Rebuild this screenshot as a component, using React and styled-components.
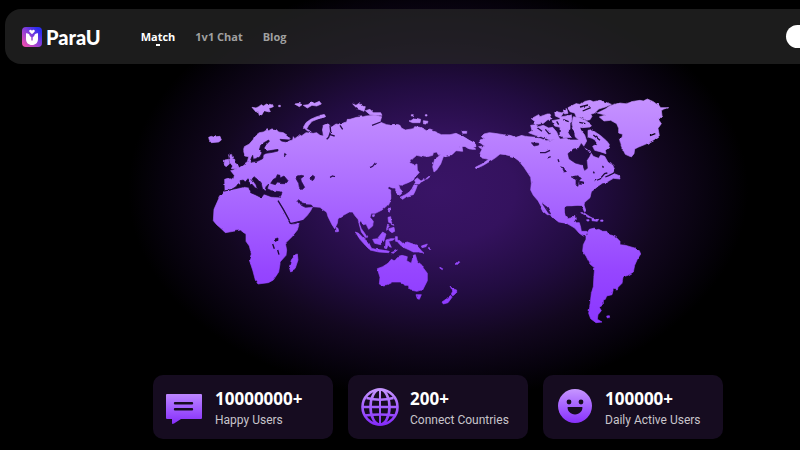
import React from 'react'
import styled, { createGlobalStyle } from 'styled-components'

const GlobalStyle = createGlobalStyle`
  body {
    margin: 0;
    background: #000;
    overflow: hidden;
    font-family: 'Open Sans', 'Noto Sans', sans-serif;
  }
`

const Page = styled.div`
  box-sizing: border-box;
  min-width: 876px;
  min-height: 100vh;
  padding: 9px 5px;
  background: radial-gradient(
    ellipse 310px 210px at 50% 190px,
    #391466 0%,
    #34125e 25%,
    #220c41 50%,
    #12071f 72%,
    #06020c 90%,
    #000 100%
  );
`

const Header = styled.header`
  box-sizing: border-box;
  display: flex;
  align-items: center;
  height: 55px;
  padding: 0 17px;
  border-radius: 16px;
  background: rgba(38, 38, 38, 0.74);
`

const Brand = styled.a`
  display: flex;
  align-items: center;
  gap: 4px;
  color: #fff;
  text-decoration: none;
`

const BrandName = styled.span`
  font-family: Lato, sans-serif;
  font-size: 20px;
  line-height: 20px;
  font-weight: 900;
`

const Nav = styled.nav`
  display: flex;
  gap: 20px;
  margin-left: 40px;
`

const NavLink = styled.a`
  position: relative;
  color: ${props => (props.$active ? '#fff' : '#a0a0a0')};
  font-size: 11px;
  line-height: 16px;
  font-weight: 700;
  text-decoration: none;

  &::after {
    content: '';
    display: ${props => (props.$active ? 'block' : 'none')};
    position: absolute;
    left: 50%;
    bottom: -1px;
    width: 4px;
    height: 2px;
    margin-left: -2px;
    background: #fff;
  }
`

const AccountButton = styled.button`
  width: 68px;
  height: 23px;
  margin-left: auto;
  padding: 0;
  border: none;
  border-radius: 12px;
  background: #fff;
  cursor: pointer;
`

const Map = styled.svg`
  display: block;
  width: 484px;
  height: 240px;
  margin: 26px auto 45px;
`

const Stats = styled.section`
  display: grid;
  grid-template-columns: repeat(3, 180px);
  gap: 15px;
  justify-content: center;
`

const StatCard = styled.article`
  box-sizing: border-box;
  display: flex;
  align-items: center;
  gap: 10px;
  height: 64px;
  padding: 0 12px;
  border-radius: 10px;
  background: #160c20;
`

const StatText = styled.div`
  display: flex;
  flex-direction: column;
  padding-top: 4px;
  white-space: nowrap;
`

const StatValue = styled.strong`
  color: #fff;
  font-size: 17px;
  line-height: 22px;
  font-weight: 700;
`

const StatLabel = styled.span`
  color: #c8c5cb;
  font-family: Roboto, sans-serif;
  font-size: 12px;
  line-height: 20px;
`

// Each region keeps its shapes relative to its own origin on the map canvas.
const REGIONS = [
  {
    name: 'europe',
    x: 600,
    y: 270,
    land: `M62 330L75 300 74 268 90 263 101 266 103 256 92 242 108 238 120 232 130 224 142 215 146 200 134 198 131 182 133 170 148 162 160 148 164 138 170 134 178 128 190 126 202 119 206 122 215 117 228 118 236 126 250 128 262 136 270 146 262 154 278 150 280 140 284 146 292 140 300 134 304 138 318 128 340 130 350 128 360 136 372 140 378 142 372 130 368 120 370 106 385 102 395 112 400 120 420 100 420 330Z
      M26 142L34 139 40 141 60 139 64 150 56 156 34 158 28 150Z
      M86 194L94 190 98 206 104 208 106 220 116 228 112 236 94 236 98 228 90 218Z
      M74 210L86 208 88 222 78 230 72 224Z
      M156 52L168 54 176 50 184 44 190 48 200 42 218 44 220 50 204 56 208 66 192 62 186 74 178 76 174 64 168 66Z
      M236 46h5v4h-5z M284 42L298 40 306 44 298 50Z
      M310 46L324 44 334 36 344 40 358 34 364 42 350 48 336 46 322 54Z
      M310 112L318 98 332 88 350 80 374 74 376 80 356 86 336 94 326 106 320 116 334 126 322 122Z`,
    water: `M178 180L182 166 192 158 206 150 208 154 198 164 192 174 198 184 216 181 234 178 234 183 218 187 198 190 190 194 188 206 172 214 150 217 154 204 158 196 160 208 170 206 180 200 186 188Z
      M240 148L268 150 260 156 244 153Z M254 190l5 4-2 6-4-4z
      M212 280L220 268 228 264 232 254 240 256 240 264 252 258 264 272 260 278 244 278 232 276 226 284Z
      M288 266L294 258 304 256 312 258 302 266 304 274 314 292 306 299 298 292 296 280Z
      M332 262l6-6 6 4-2 8-6 4z
      M72 303L92 300 108 290 114 282 122 280 120 272 130 270 136 276 144 266 150 276 166 294 172 296 168 284 156 268 162 260 172 268 184 282 188 298 194 304 198 290 206 282 202 296 214 302 246 306 242 322 214 320 192 312 184 323 166 314 152 308 146 292 132 290 112 295Z`,
    lakes: 'M390 262L398 258 408 260'
  },
  {
    name: 'asia',
    x: 960,
    y: 270,
    land: `M-10 138L10 138 8 120 12 106 24 102 34 112 48 102 60 104 72 98 80 96 82 88 90 88 110 82 130 80 138 78 165 76 185 80 180 96 200 104 214 106 220 102 240 106 244 114 256 120 280 116 284 110 300 112 320 122 330 120 345 126 364 134 390 134 408 130 430 140 446 150 464 160 466 170 452 172 448 178 430 166 418 170 428 184 408 182 396 194 378 196 370 200 362 222 350 240 342 246 338 230 344 208 358 198 370 182 372 186 356 196 350 186 340 188 338 196 316 202 290 196 276 208 268 218 282 224 288 230 290 250 280 270 264 278 244 286 236 284 240 296 248 306 240 316 230 310 226 294 218 294 208 290 198 294 212 300 212 326 208 335 -10 335Z
      M286 224L291 222 292 240 298 248 290 254Z
      M284 270L292 264 304 274 298 282 288 282Z
      M292 286L286 302 280 314 262 318 248 328 240 322 256 314 268 306 276 296 282 284Z
      M302 274l12-8 2 3-12 7z M318 266l10-8 1 3-9 7z
      M98 42L108 46 120 38 126 48 136 50 132 64 112 56Z
      M136 62L150 58 160 68 182 68 186 76 150 74Z
      M268 94L276 90 284 84 302 88 300 98 278 98Z
      M274 74h6v4h-6z M316 74h5v4h-5z M310 92L324 94 322 100 310 98Z M426 124h14v6h-12z
      M0 76l12-2 4 6-14 4z`,
    lakes:
      'M30 106L32 124 26 142 20 148M30 134L44 138M60 106L68 118M156 106L182 96M150 233L158 229 166 219'
  },
  {
    name: 'africa',
    x: 600,
    y: 540,
    land: `M78 28L110 24 150 22 154 38 168 44 184 54 196 44 216 50 238 50 242 64 238 70 262 112 270 128 276 134 298 130 292 150 276 170 262 184 256 190 260 210 258 226 240 246 240 252 236 276 220 300 205 308 174 312 166 300 158 270 148 240 154 222 148 198 138 184 138 162 128 156 122 150 100 154 76 158 64 146 50 134 40 122 42 88 58 52 72 34Z
      M236 64L240 50 240 36 250 20 420 10 420 60 380 96 370 90 360 82 338 80 332 92 322 106 308 120 274 132 268 118 252 90Z
      M286 224L292 222 294 240 284 270 272 276 268 262 274 240Z`,
    water: 'M226 176l8-2 0 8-7 3z M292 58L300 62 306 72 318 74 334 75 338 80 316 82 304 76Z',
    lakes: 'M234 62L250 88 272 129M272 131L310 122M218 192L223 206M233 210L237 224'
  },
  {
    name: 'oceania',
    x: 960,
    y: 570,
    land: `M-10 20L0 50 12 52 20 66 24 80 36 104 44 116 52 100 54 86 70 76 88 66 98 66 104 76 114 88 120 106 124 116 134 130 142 143 136 142 124 126 117 100 122 92 130 104 138 102 146 118 158 108 160 94 150 82 154 70 166 70 186 60 202 46 212 26 212 14 204 0 204 -30 -10 -30Z
      M48 112l6 3 2 9-6 2z M158 74l6 0-2 6-5-1z
      M106 126L116 130 130 144 146 158 154 174 146 176 136 166 120 148Z
      M148 174L168 178 190 180 208 184 206 188 176 186 150 180Z
      M158 148L172 146 188 126 198 132 192 152 182 164 164 160Z
      M198 150L212 146 224 146 220 150 206 154 214 172 208 170 204 164 200 176 196 174Z
      M204 82L212 80 214 96 222 106 206 100Z M202 106l6 2-8 10z M206 116L222 112 224 124 216 128 208 122Z
      M206 54l5 2-3 11-4-4z M226 140h6v14h-5z
      M228 150L240 152 248 160 262 156 290 166 302 180 312 190 296 186 280 186 268 180 250 172 240 164Z
      M304 168L322 162 318 170 306 173Z M326 172l6 4-2 3-5-4z M214 188L232 180 220 190Z
      M172 236L188 230 204 220 214 208 222 212 232 200 246 196 262 200 260 212 274 220 280 196 286 194 292 214 306 226 310 234 322 250 322 272 308 300 290 304 272 300 264 286 254 286 248 278 240 276 216 276 200 284 184 286 178 282 180 262Z
      M288 314L304 314 298 328 292 326Z
      M390 288L398 296 410 300 410 308 398 318 394 312 398 304Z
      M392 316L396 322 384 338 370 342 366 336 380 326Z
      M360 232l8 4-1 3-8-5z M408 222l9-8 2 3-8 7z`
  },
  {
    name: 'north-america',
    x: 1380,
    y: 270,
    land: `M0 136L12 142 28 152 46 162 48 170 40 172 44 178 32 178 20 168 6 170 8 182 0 176Z
      M60 150L72 146 64 140 72 132 88 128 104 130 130 134 150 136 168 142 186 136 204 140 230 142 260 152 280 150 300 148 330 150 362 150 362 346 312 348 312 385 276 382 262 352 248 335 268 368 272 374 262 374 252 366 244 350 234 332 220 316 212 300 214 280 212 262 204 250 192 232 176 212 160 200 136 194 120 192 108 202 96 210 70 226 48 236 46 232 66 222 86 208 66 204 60 190 66 178 56 170 74 168 60 158Z
      M272 376L276 378 296 396 320 400 314 370 280 370Z
      M214 86L236 74 240 80 262 72 270 72 276 86 262 90 250 100 226 104 224 94Z
      M212 106L228 104 236 110 250 106 266 114 278 112 290 126 296 140 300 148 270 150 244 140 226 136 206 128 216 122Z
      M284 64L304 68 312 66 300 84 286 78Z M276 92L300 88 312 96 330 100 330 118 306 124 300 112 284 108Z
      M310 60l10-4 4 14-10 2z M320 78l14-4 2 14-14 4z M324 56L350 42 362 50 356 70 336 64Z
      M340 80L362 84 360 130 342 126 336 100Z M304 130l20-2 8 14-22 2z`,
    water: 'M214 158l22 2 0 5-14 3z M302 230l10 4 4 12-6 0-4-8z M248 342L262 352 272 372 266 370Z',
    lakes:
      'M240 188L256 188 270 181M262 204L272 200M294 208L297 216M230 112L246 124M256 118L268 132M290 94L296 104M340 264h18l-6 24'
  },
  {
    name: 'greenland',
    x: 1680,
    y: 255,
    land: `M-20 165L20 160 34 172 56 168 70 186 90 200 100 214 116 220 122 210 134 214 144 232 158 240 164 254 158 264 178 272 180 282 160 280 140 292 128 294 116 302 104 312 94 320 90 338 74 352 72 360 78 378 73 380 66 362 50 358 36 362 22 360 12 368 12 380 -20 380Z
      M84 136L96 134 104 140 122 152 140 168 148 178 146 188 136 196 138 206 120 200 104 196 98 184 112 176 104 164 96 160 84 156Z
      M24 68L48 56 60 58 70 50 90 46 100 50 120 46 154 58 136 66 116 72 104 84 92 88 96 94 90 104 80 106 66 96 50 98 44 84 30 80Z
      M0 96L24 92 36 108 22 124 0 120Z M44 106L66 100 94 118 90 126 66 128 46 120Z
      M36 128L60 132 74 150 80 168 70 186 58 166 46 156 44 140Z M0 128L28 134 20 150 0 154Z
      M118 96L136 90 112 84 124 78 136 72 150 62 178 54 196 56 214 50 240 46 250 48 262 42 280 50 288 56 296 60 302 68 326 68 304 76 306 92 296 104 304 116 294 130 298 152 282 164 256 178 236 186 224 192 222 206 214 216 196 208 184 184 178 160 186 158 188 148 176 144 176 130 170 116 152 106 132 108Z`,
    water: `M24 206L40 192 56 190 64 176 72 186 78 196 92 204 88 214 80 226 82 250 74 256 68 240 46 234 28 222Z
      M34 276L50 272 64 280 60 284 54 288 54 304 48 300 48 284Z M58 288l16 4-2 6-14 0z`,
    lakes:
      'M104 288L120 282 134 266 142 264M136 276L146 272 162 264M60 66L84 60M68 78L92 68M10 104L26 110M58 112L76 116M100 150L120 166M270 152L286 146M128 242l2 6M100 260l3 5'
  },
  {
    name: 'south-america',
    x: 1620,
    y: 570,
    land: `M10 36L20 56 28 66 36 80 52 92 80 100 104 114 118 130 130 138 144 134 140 124 124 124 122 112 118 98 100 98 106 88 104 76 96 84 84 86 74 76 72 56 74 40 40 10Z
      M122 68L132 68 140 74 156 84 144 82 134 74Z M156 84L176 88 172 94 156 92Z M140 89h7v4h-6z M182 90h7v4h-7z
      M138 134L148 118 164 114 168 120 176 118 188 124 200 124 206 134 216 136 228 142 240 154 240 164 256 166 270 170 284 174 298 182 302 192 292 208 284 226 280 246 264 256 250 260 246 280 234 292 232 300 220 298 216 314 200 318 196 328 190 330 190 344 178 352 184 362 174 374 172 388 186 396 168 398 152 386 146 370 150 346 154 310 160 290 162 256 164 234 150 222 138 198 128 184 130 164 138 148Z
      M200 378l8-1 1 5-7 2z`
  }
]

const WorldMap = () => (
  <Map viewBox="588 270 1452 720" role="img">
    <defs>
      <linearGradient id="land" x1="0" y1="0" x2="0" y2="1">
        <stop offset="0" stopColor="#c896ff" />
        <stop offset="0.45" stopColor="#a968ff" />
        <stop offset="0.75" stopColor="#9646ff" />
        <stop offset="1" stopColor="#8a35ff" />
      </linearGradient>
      <filter id="coastline" filterUnits="userSpaceOnUse" x="588" y="270" width="1452" height="720">
        <feTurbulence type="fractalNoise" baseFrequency="0.05" numOctaves="2" seed="4" />
        <feDisplacementMap
          in="SourceGraphic"
          scale="7"
          xChannelSelector="R"
          yChannelSelector="G"
        />
      </filter>
      <mask id="continents" maskUnits="userSpaceOnUse" x="588" y="270" width="1452" height="720">
        <g filter="url(#coastline)">
          {REGIONS.map(({ name, x, y, land }) => (
            <path
              key={name}
              transform={`translate(${x} ${y})`}
              d={land}
              fill="#fff"
              stroke="#fff"
              strokeWidth="2"
              strokeLinejoin="round"
            />
          ))}
          {REGIONS.map(({ name, x, y, water, lakes }) => (
            <g key={name} transform={`translate(${x} ${y})`}>
              {water && <path d={water} fill="#000" stroke="#000" strokeWidth="2" />}
              {lakes && <path d={lakes} fill="none" stroke="#000" strokeWidth="4" />}
            </g>
          ))}
        </g>
      </mask>
    </defs>
    <rect x="588" y="270" width="1452" height="720" fill="url(#land)" mask="url(#continents)" />
  </Map>
)

const Logo = () => (
  <svg width="20" height="20" viewBox="0 0 20 20">
    <defs>
      <linearGradient id="logo" x1="0" y1="1" x2="1" y2="0">
        <stop offset="0" stopColor="#ff4fa8" />
        <stop offset="0.5" stopColor="#8a3fd8" />
        <stop offset="0.85" stopColor="#2c2cf0" />
      </linearGradient>
    </defs>
    <rect width="20" height="20" rx="4" fill="url(#logo)" />
    <path
      d="M4 6.2C6 6 7.6 7 7.8 9L9.3 10.2V13.4H10.7V10.2L12.2 9C12.4 7 14 6 16 6.2V12C16 15.8 13.6 18 10 18S4 15.8 4 12Z"
      fill="#fff"
    />
    <path d="M10 7.2L7.4 4.7C6.5 3.2 8.8 2 10 3.7C11.2 2 13.5 3.2 12.6 4.7Z" fill="#fff" />
  </svg>
)

const IconGradient = ({ id }) => (
  <linearGradient id={id} x1="0" y1="0" x2="0" y2="38" gradientUnits="userSpaceOnUse">
    <stop offset="0" stopColor="#c899ff" />
    <stop offset="0.5" stopColor="#a45fff" />
    <stop offset="1" stopColor="#8328fa" />
  </linearGradient>
)

const MessageIcon = () => (
  <svg width="40" height="38" viewBox="0 0 40 38">
    <defs>
      <IconGradient id="message" />
    </defs>
    <path
      d="M3 6H36Q37 6 37 7V30Q37 31 36 31H16L9 35.5Q7 36.5 7 35V31H2Q1 31 1 30V7Q1 6 2 6Z"
      fill="url(#message)"
    />
    <path d="M10 15.3H27M10 21.3H27" stroke="#160c20" strokeWidth="2.4" strokeLinecap="round" />
  </svg>
)

const GlobeIcon = () => (
  <svg width="40" height="38" viewBox="0 0 40 38">
    <defs>
      <IconGradient id="globe" />
    </defs>
    <g fill="none" stroke="url(#globe)" strokeWidth="2.6">
      <circle cx="20" cy="19" r="17.5" />
      <ellipse cx="20" cy="19" rx="9.5" ry="17.5" />
      <path d="M19 1H21V37H19Z" fill="url(#globe)" stroke="none" />
      <path d="M6.5 10Q20 13.5 33.5 10M2 19H38M5 27.5Q20 25.5 35 27.5" />
    </g>
  </svg>
)

const SmileIcon = () => (
  <svg width="40" height="38" viewBox="0 0 40 38">
    <defs>
      <IconGradient id="smile" />
    </defs>
    <circle cx="20" cy="18" r="17" fill="url(#smile)" />
    <circle cx="14" cy="14" r="2.4" fill="#160c20" />
    <circle cx="26" cy="14" r="2.4" fill="#160c20" />
    <path d="M12.7 19H27.3C28 22.5 24.5 26.5 20 26.5S12 22.5 12.7 19Z" fill="#160c20" />
  </svg>
)

const STATS = [
  { value: '10000000+', label: 'Happy Users', Icon: MessageIcon },
  { value: '200+', label: 'Connect Countries', Icon: GlobeIcon },
  { value: '100000+', label: 'Daily Active Users', Icon: SmileIcon }
]

const LINKS = ['Match', '1v1 Chat', 'Blog']

export default function App() {
  return (
    <Page>
      <GlobalStyle />
      <Header>
        <Brand href="#">
          <Logo />
          <BrandName>ParaU</BrandName>
        </Brand>
        <Nav>
          {LINKS.map((link, index) => (
            <NavLink key={link} href="#" $active={index === 0}>
              {link}
            </NavLink>
          ))}
        </Nav>
        <AccountButton aria-label="Account" />
      </Header>
      <main>
        <WorldMap />
        <Stats>
          {STATS.map(({ value, label, Icon }) => (
            <StatCard key={label}>
              <Icon />
              <StatText>
                <StatValue>{value}</StatValue>
                <StatLabel>{label}</StatLabel>
              </StatText>
            </StatCard>
          ))}
        </Stats>
      </main>
    </Page>
  )
}
